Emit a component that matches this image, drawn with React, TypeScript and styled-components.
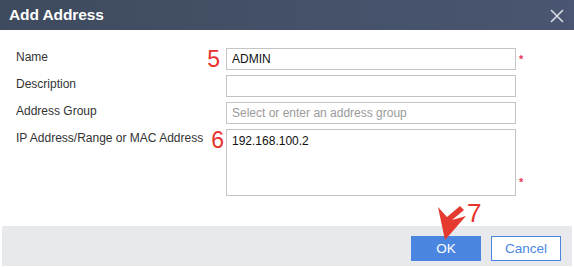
import React from "react";
import styled, { createGlobalStyle } from "styled-components";

const Global = createGlobalStyle`
  html, body { margin: 0; padding: 0; background: #ffffff; }
  body { font-family: "Liberation Sans", Arial, sans-serif; }
  * { box-sizing: border-box; }
`;

const Dialog = styled.div`
  position: relative;
  width: 574px;
  height: 267px;
  display: flex;
  flex-direction: column;
  background: #ffffff;
  overflow: hidden;
`;

const TitleBar = styled.div`
  height: 30px;
  flex: none;
  display: flex;
  align-items: center;
  justify-content: space-between;
  padding: 0 10px 0 9px;
  background: linear-gradient(90deg, #3e4a5d 0%, #45526a 60%, #4a5571 100%);
`;

const Title = styled.div`
  color: #ffffff;
  font-weight: 700;
  font-size: 15.5px;
  letter-spacing: -0.1px;
`;

const CloseButton = styled.div`
  width: 14px;
  height: 14px;
  display: flex;
  margin-top: 1px;
`;

const Body = styled.div`
  flex: 1;
  padding: 18px 0 0 16px;
`;

const Form = styled.div`
  display: grid;
  grid-template-columns: 190px 20px 290px 12px;
  row-gap: 5px;
`;

const Label = styled.div`
  font-size: 12px;
  line-height: 16px;
  color: #333333;
  padding-top: 1px;
`;

const Marker = styled.div<{ $shift?: number }>`
  font-size: 23px;
  line-height: 22px;
  color: #e8322e;
  text-align: right;
  padding-right: ${(p) => 6 - (p.$shift ?? 0)}px;
`;

const Field = styled.div<{ $tall?: boolean }>`
  height: ${(p) => (p.$tall ? "67px" : "22px")};
  border: 1px solid #c4c4c4;
  background: #ffffff;
  padding: ${(p) => (p.$tall ? "4px 5px" : "0 5px")};
  display: flex;
  align-items: ${(p) => (p.$tall ? "flex-start" : "center")};
  font-size: 12px;
  color: #111111;
`;

const Placeholder = styled.span`
  color: #9a9a9a;
`;

const Star = styled.div<{ $bottom?: boolean }>`
  color: #ea3a5a;
  font-size: 11px;
  font-weight: 700;
  padding-left: 3px;
  align-self: ${(p) => (p.$bottom ? "end" : "center")};
  padding-bottom: ${(p) => (p.$bottom ? "9px" : "0")};
  line-height: 10px;
`;

const Footer = styled.div`
  height: 40px;
  margin: 0 2px 1px 2px;
  background: #e8e9ed;
  display: flex;
  justify-content: flex-end;
  align-items: flex-start;
  gap: 10px;
  padding: 10px 11px 0 0;
`;

const Button = styled.div<{ $primary?: boolean }>`
  width: 70px;
  height: 25px;
  display: flex;
  align-items: center;
  justify-content: center;
  font-size: 13.5px;
  background: ${(p) => (p.$primary ? "#4a86e0" : "#ffffff")};
  color: ${(p) => (p.$primary ? "#ffffff" : "#4a86e0")};
  border: 1px solid #4a86e0;
`;

const StepSeven = styled.div`
  position: absolute;
  left: 467px;
  top: 200px;
  font-size: 26px;
  line-height: 26px;
  color: #e8322e;
`;

const Arrow = styled.svg`
  position: absolute;
  left: 430px;
  top: 200px;
`;

export default function App() {
  return (
    <>
      <Global />
      <Dialog>
        <TitleBar>
          <Title>Add Address</Title>
          <CloseButton>
            <svg width="14" height="14" viewBox="0 0 14 14">
              <path d="M1 1 L13 13 M13 1 L1 13" stroke="#d9dde5" strokeWidth="1.6" />
            </svg>
          </CloseButton>
        </TitleBar>
        <Body>
          <Form>
            <Label>Name</Label>
            <Marker>5</Marker>
            <Field>ADMIN</Field>
            <Star>*</Star>

            <Label>Description</Label>
            <Marker />
            <Field />
            <Star />

            <Label>Address Group</Label>
            <Marker />
            <Field>
              <Placeholder>Select or enter an address group</Placeholder>
            </Field>
            <Star />

            <Label>IP Address/Range or MAC Address</Label>
            <Marker $shift={4}>6</Marker>
            <Field $tall>192.168.100.2</Field>
            <Star $bottom>*</Star>
          </Form>
        </Body>
        <Footer>
          <Button $primary>OK</Button>
          <Button>Cancel</Button>
        </Footer>
        <StepSeven>7</StepSeven>
        <Arrow width="40" height="45" viewBox="0 0 40 45">
          <polygon points="15,40 8,7 17,17 30,6 34,10 22,20 36,16" fill="#e53a2f" />
        </Arrow>
      </Dialog>
    </>
  );
}
